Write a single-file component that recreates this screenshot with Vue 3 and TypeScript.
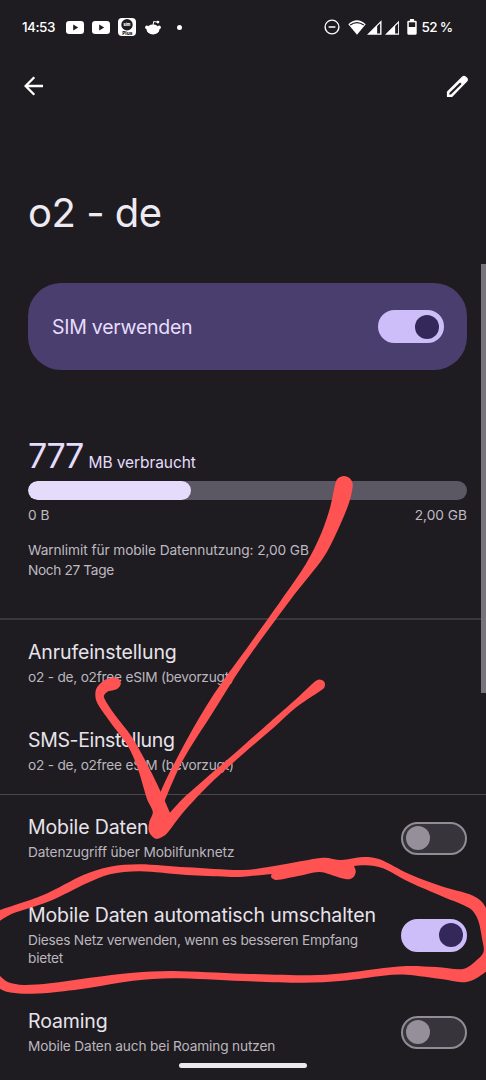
<script setup lang="ts">
type Point = [number, number]

interface Entry {
  title: string
  lines: string[]
  cls: string
  on?: boolean
}

const linkEntries: Entry[] = [
  { title: 'Anrufeinstellung', lines: ['o2 - de, o2free eSIM (bevorzugt)'], cls: 'calls' },
  { title: 'SMS-Einstellung', lines: ['o2 - de, o2free eSIM (bevorzugt)'], cls: 'sms' },
]

const switchEntries: Entry[] = [
  { title: 'Mobile Daten', lines: ['Datenzugriff über Mobilfunknetz'], cls: 'data', on: false },
  {
    title: 'Mobile Daten automatisch umschalten',
    lines: ['Dieses Netz verwenden, wenn es besseren Empfang', 'bietet'],
    cls: 'auto',
    on: true,
  },
  { title: 'Roaming', lines: ['Mobile Daten auch bei Roaming nutzen'], cls: 'roaming', on: false },
]

// Each run is a smooth curve; consecutive runs meet in a corner.
function outline(runs: Point[][]): string {
  let d = ''
  runs.forEach((run, r) => {
    d += `${r === 0 ? 'M' : 'L'}${run[0][0]} ${run[0][1]}`
    for (let i = 0; i < run.length - 1; i++) {
      const a = run[Math.max(i - 1, 0)]
      const b = run[i]
      const c = run[i + 1]
      const e = run[Math.min(i + 2, run.length - 1)]
      // Handles stay within a third of the segment so uneven spacing does not overshoot.
      const len = Math.hypot(c[0] - b[0], c[1] - b[1])
      const h1 = Math.min(1 / 6, len / 3 / (Math.hypot(c[0] - a[0], c[1] - a[1]) || 1))
      const h2 = Math.min(1 / 6, len / 3 / (Math.hypot(e[0] - b[0], e[1] - b[1]) || 1))
      d += `C${b[0] + (c[0] - a[0]) * h1} ${b[1] + (c[1] - a[1]) * h1} ${c[0] - (e[0] - b[0]) * h2} ${c[1] - (e[1] - b[1]) * h2} ${c[0]} ${c[1]}`
    }
  })
  return d + 'Z'
}

const strokes: string[] = [
  // arrow shaft
  outline([
    [[156, 815], [160.7, 791.7], [186.7, 740], [213.3, 695], [243, 653.5], [281.3, 600], [306.3, 563.3], [321.3, 533.3], [330.3, 506.7], [335.2, 484], [338, 478.3], [344, 476], [350, 478.5], [352.8, 485], [349, 503], [336.3, 533.3], [323, 558.3], [290.3, 600], [243, 665], [213.3, 711.7], [183, 760], [165, 800]],
  ]),
  // left barb
  outline([
    [[170, 812.7], [160.7, 791.7], [146.7, 763.3], [131.7, 736.7], [115, 715], [104, 697.5], [107, 692], [117, 689], [120.8, 684], [118.5, 678.5], [112.5, 677.6], [103.3, 681], [96, 689.5], [96.7, 701.7], [110, 721.7], [128.3, 746.7], [138.3, 770], [147, 799], [152.8, 812], [149.3, 821.7], [149, 831.7], [156, 838.7], [165, 835], [173.3, 825]],
  ]),
  // right barb
  outline([
    [[160, 815], [170, 812.7]],
    [[170, 812.7], [183.3, 798.3], [205, 779], [243, 746], [299.7, 695.7], [315.2, 681.3], [319.5, 679.4], [323.6, 681.1], [325, 684.9], [323, 689], [296.3, 707.3], [273, 728.3], [243, 754], [213, 781], [200, 794], [183.3, 812.3], [173.3, 825], [165, 835], [156, 838.7]],
  ]),
  // loop around the automatic switching row
  outline([
    [[-4, 912], [0, 910], [43.3, 895], [83.3, 875], [110, 866.7], [140, 864.3], [186.7, 867.3], [243, 870], [276, 865.7], [323, 857.7], [341.3, 860], [363, 857], [379.7, 859.3], [409.7, 874.3], [443, 886.7], [469.7, 894.3], [482, 902], [490, 916]],
    [[490, 968], [486, 971.7], [473, 980], [461.3, 982.3], [443, 979.3], [406.3, 974.7], [383, 975.7], [343, 980.7], [303, 982.7], [243, 981], [173.3, 978.3], [133.3, 980.7], [90, 987.7], [50, 992.7], [23.3, 993.7], [6.7, 991.7], [-3, 987]],
    [[-3, 972], [0, 976], [8.3, 982.3], [23.3, 985], [50, 983.3], [90, 977.7], [133.3, 972.7], [173.3, 971], [243, 973.7], [309.7, 975.3], [343, 973.3], [376.3, 969], [406.3, 966], [436.3, 967], [463, 969], [476, 960.7], [483.5, 952], [482.3, 940], [478, 920], [469.7, 908.3], [443, 896.7], [409.7, 882.3], [383, 868.3], [366, 865.3], [354, 866]],
    [[354, 866], [355.7, 871], [354, 876.5], [349, 879.3], [339.7, 877.7], [319.7, 872], [299.7, 875.7], [276.3, 880], [271.3, 877.5], [271.7, 874]],
    [[271.7, 874], [243, 876.7], [226.7, 876.7], [186.7, 875], [140, 871.3], [110, 874.3], [86.7, 883.3], [50, 901], [13.3, 913.3], [0, 920.7], [-4, 923]],
  ]),
]
</script>

<template>
  <main class="screen">
    <header class="status">
      <span class="clock">14:53</span>
      <svg v-for="n in 2" :key="n" class="tube" viewBox="0 0 18 13">
        <rect width="18" height="13" rx="3.2" fill="#fff" />
        <path d="M7.2 3.6 12.2 6.5 7.2 9.4Z" fill="#1e1c21" />
      </svg>
      <svg class="plus" viewBox="0 0 18 18">
        <rect width="18" height="18" rx="4" fill="#fff" />
        <circle cx="9" cy="6.7" r="5.7" fill="#1e1c21" />
        <text x="9" y="8.2" font-size="3.8" font-weight="800" text-anchor="middle" fill="#fff">sim</text>
        <text x="9.3" y="16.8" font-size="4.8" font-weight="800" text-anchor="middle" fill="#1e1c21">Plus</text>
      </svg>
      <svg class="reddit" viewBox="0 0 16 15">
        <ellipse cx="8" cy="9.5" rx="6.4" ry="4.9" fill="#fff" />
        <circle cx="1.9" cy="7.4" r="1.8" fill="#fff" />
        <circle cx="14.1" cy="7.4" r="1.8" fill="#fff" />
        <path d="M8 5.5 8.7 1.5 12 2" fill="none" stroke="#fff" stroke-width="1" />
        <circle cx="12.9" cy="2.1" r="1.4" fill="#fff" />
      </svg>
      <i class="dot"></i>
      <svg class="dnd" viewBox="0 0 16 16">
        <circle cx="8" cy="8" r="6.9" fill="none" stroke="#fff" stroke-width="1.4" />
        <path d="M4.6 8H11.4" stroke="#fff" stroke-width="1.5" />
      </svg>
      <svg class="wifi" viewBox="0 0 18 15">
        <path d="M.3 4.2Q9-3.5 17.7 4.2L9 14.8Z" fill="#fff" />
        <path d="M2.2 5.1Q9 .1 15.8 5.1" fill="none" stroke="#1e1c21" stroke-width="1.2" />
      </svg>
      <svg v-for="n in 2" :key="'s' + n" class="signal" viewBox="0 0 15 15">
        <path d="M0 15 15 0V15Z" fill="#fff" />
        <path d="M10.5 6.2 13.6 3V13.6H10.5Z" fill="#1e1c21" />
      </svg>
      <svg class="battery" viewBox="0 0 10 16">
        <path d="M3 0H7V1.7H8.6Q9.7 1.7 9.7 2.8V14.6Q9.7 15.7 8.6 15.7H1.4Q.3 15.7.3 14.6V2.8Q.3 1.7 1.4 1.7H3Z" fill="#fff" />
        <rect x="1.8" y="3.3" width="6.4" height="4.7" fill="#1e1c21" />
      </svg>
      <span class="percent">52 %</span>
    </header>

    <nav class="toolbar">
      <svg class="back" viewBox="0 0 20 20">
        <path d="M19 10H2M10.3 1.3 1.6 10 10.3 18.7" fill="none" stroke="#fff" stroke-width="2.3" />
      </svg>
      <svg class="edit" viewBox="0 0 22 23">
        <path d="M1.5 21.5V17L16.6 1.9Q18 .8 19.4 1.9L20.7 3.2Q21.9 4.7 20.7 6.1L5.7 21.5Z" fill="#fff" stroke="#fff" stroke-width="1.2" stroke-linejoin="round" />
        <path d="M3.4 19.6V18.1L14.1 7.4 15.6 8.9 4.9 19.6Z" fill="#1e1c21" />
      </svg>
    </nav>

    <h1>o2 - de</h1>

    <section class="card">
      <span>SIM verwenden</span>
      <span class="switch on"><i></i></span>
    </section>

    <section class="usage">
      <div class="amount"><span class="number">777</span><span class="unit">MB verbraucht</span></div>
      <div class="bar"><i></i></div>
      <div class="scale"><span>0 B</span><span>2,00 GB</span></div>
      <p><span class="warn">Warnlimit für mobile Datennutzung: 2,00 GB</span><br /><span class="days">Noch 27 Tage</span></p>
    </section>

    <section class="group links">
      <div v-for="e in linkEntries" :key="e.title" class="row" :class="e.cls">
        <div>
          <h2>{{ e.title }}</h2>
          <p v-for="l in e.lines" :key="l">{{ l }}</p>
        </div>
      </div>
    </section>
    <section class="group">
      <div v-for="e in switchEntries" :key="e.title" class="row" :class="e.cls">
        <div>
          <h2>{{ e.title }}</h2>
          <p v-for="l in e.lines" :key="l">{{ l }}</p>
        </div>
        <span class="switch" :class="{ on: e.on }"><i></i></span>
      </div>
    </section>

    <i class="scrollbar"></i>
    <svg class="ink" viewBox="0 0 486 1080">
      <path v-for="(d, i) in strokes" :key="i" :d="d" fill="#ff5353" />
    </svg>
    <i class="home"></i>
  </main>
</template>

<style>
html,
body {
  background: #1e1c21;
}
</style>

<style scoped>
.screen {
  position: relative;
  width: 486px;
  height: 1080px;
  overflow: hidden;
  background: #1e1c21;
  color: #e8e3ea;
  font-family: Inter, Roboto, sans-serif;
}
h1, h2, p { margin: 0; font-weight: 400; white-space: nowrap; }
i { display: block; }
svg { display: block; flex: none; }
span { white-space: nowrap; }

.status {
  display: flex;
  align-items: center;
  height: 54px;
  padding: 0 0 0 22px;
  box-sizing: border-box;
  color: #fff;
}
.clock { width: 44px; font-size: 13.5px; font-weight: 500; letter-spacing: -0.5px; }
.tube { width: 18px; height: 13px; margin-right: 8px; }
.plus { width: 18px; height: 18px; margin-right: 9px; }
.reddit { width: 16px; height: 15px; margin-right: 16px; }
.dot { width: 5px; height: 5px; border-radius: 50%; background: #fff; margin-right: 142px; }
.dnd { width: 16px; height: 16px; margin-right: 8px; }
.wifi { width: 18px; height: 15px; margin-right: 1px; }
.signal { width: 14.5px; height: 15px; margin-right: 3px; }
.battery { width: 10px; height: 16px; margin: 0 4.5px 0 5px; }
.percent { font-size: 13.5px; font-weight: 500; letter-spacing: -0.7px; }

.toolbar {
  display: flex;
  justify-content: space-between;
  align-items: center;
  height: 64px;
  padding: 0 18px 0 23.5px;
}
.back { width: 20px; height: 20px; }
.edit { width: 22px; height: 23px; }

h1 {
  margin: 70px 0 0 28px;
  height: 95px;
  font-size: 40px;
  line-height: 50px;
  letter-spacing: -0.5px;
  color: #efeaf1;
}
.card {
  display: flex;
  align-items: center;
  justify-content: space-between;
  box-sizing: border-box;
  width: 439px;
  height: 87px;
  margin-left: 28px;
  padding: 0 23.5px 0 24px;
  border-radius: 33px;
  background: #4a3e6f;
  color: #e6ddfc;
  font-size: 19.5px;
  letter-spacing: -0.25px;
}
.switch {
  display: flex;
  align-items: center;
  box-sizing: border-box;
  flex: none;
  width: 66px;
  height: 33px;
  padding: 0 2.5px;
  border: 2px solid #918d96;
  border-radius: 17px;
  background: #37343b;
}
.switch i { width: 24px; height: 24px; border-radius: 50%; background: #948f99; }
.switch.on { justify-content: flex-end; border-color: #cdbdf9; background: #cdbdf9; }
.switch.on i { background: #34275a; }

.usage { margin: 69px 19px 0 28px; color: #bfbac2; font-size: 13.7px; }
.amount { display: flex; align-items: baseline; height: 42px; line-height: 34px; color: #e6ddfc; }
.number { width: 60.5px; font-size: 34px; font-weight: 400; letter-spacing: -1.4px; }
.unit { font-size: 15.5px; letter-spacing: -0.08px; }
.bar { height: 19px; border-radius: 10px; background: #5c5863; overflow: hidden; }
.bar i { width: 163px; height: 19px; border-radius: 10px; background: #e5dcfb; }
.scale { display: flex; justify-content: space-between; line-height: 20px; margin-top: 5px; }
.usage p { line-height: 20px; margin-top: 15px; height: 78px; }
.warn { letter-spacing: -0.08px; }
.days { letter-spacing: -0.36px; }

.group.links { border-top: 2px solid #3a383d; border-bottom: 1px solid #49464c; height: 174px; }
.row {
  display: flex;
  align-items: center;
  justify-content: space-between;
  padding: 20.3px 19px 21.6px 28px;
}
.row h2 { margin-bottom: 4.5px; font-size: 19.5px; line-height: 24px; letter-spacing: -0.11px; }
.row p { color: #bbb6be; font-size: 13.7px; line-height: 17.7px; letter-spacing: -0.23px; }
.sms h2 { letter-spacing: -0.36px; }
.data p { letter-spacing: -0.12px; }
.roaming p { letter-spacing: -0.15px; }

.scrollbar { position: absolute; right: 0; top: 264px; width: 5px; height: 429px; background: #77747b; }
.ink { position: absolute; left: 0; top: 0; width: 486px; height: 1080px; }
.home { position: absolute; left: 179px; top: 1063px; width: 128px; height: 5px; border-radius: 3px; background: #ece9ed; }
</style>
